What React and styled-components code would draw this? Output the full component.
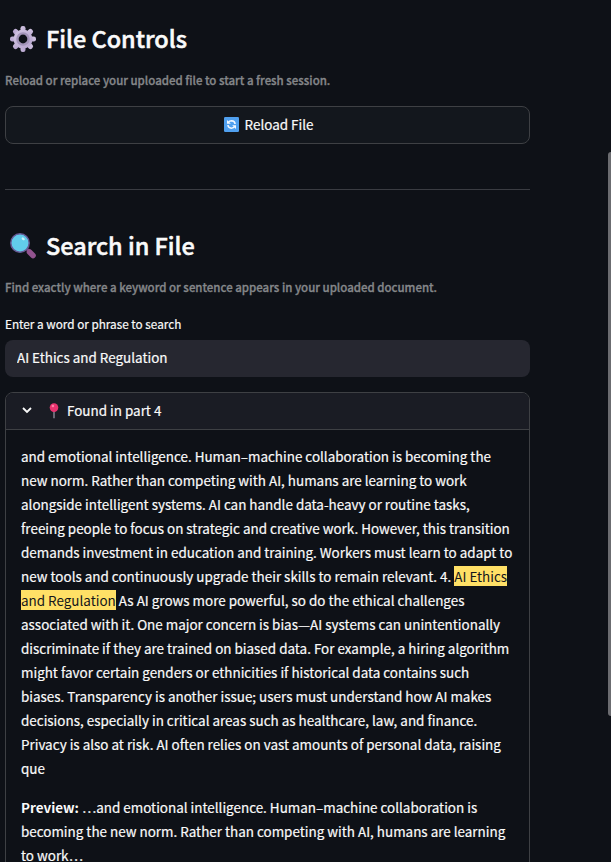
import React from "react";
import styled, { createGlobalStyle } from "styled-components";

const Global = createGlobalStyle`
  * { box-sizing: border-box; }
  html, body { margin: 0; background: #0e1117; overflow: hidden; }
  body {
    color: #fafafa;
    font-family: "Noto Sans CJK KR", "Noto Sans", sans-serif;
    font-size: 13.45px;
    line-height: 24px;
    -webkit-text-stroke: 0.2px currentColor;
  }
`;

const Page = styled.div`
  display: grid;
  grid-template-columns: 525px 3px;
  justify-content: space-between;
  width: 611px;
  height: 862px;
  padding-left: 5px;
  overflow: hidden;
`;

const Content = styled.main`
  display: flex;
  flex-direction: column;
  min-width: 0;
`;

const Heading = styled.h2`
  display: flex;
  align-items: center;
  gap: 9px;
  height: 34px;
  margin: ${({ $top }) => $top}px 0 0;
  padding-left: 4px;
  font-size: 23.45px;
  font-weight: 500;
  line-height: 34px;
  white-space: nowrap;
  -webkit-text-stroke: 0.5px currentColor;

  svg { margin-top: 2px; }
`;

const Caption = styled.p`
  margin: ${({ $top }) => $top}px 0 0;
  height: 20px;
  color: #85878a;
  font-size: 11.47px;
  font-weight: 500;
  line-height: 20px;
  white-space: nowrap;
  -webkit-text-stroke: 0.3px currentColor;
`;

const Button = styled.button`
  display: flex;
  align-items: center;
  justify-content: center;
  gap: 6px;
  height: 38px;
  margin: 16px 0 0;
  padding: 0 0 2px 2px;
  border: 1px solid #3e4044;
  border-radius: 8px;
  background: #13171d;
  color: #fafafa;
  font: inherit;

  svg { margin-top: 1px; }
`;

const Divider = styled.hr`
  width: 100%;
  height: 1px;
  margin: 45px 0 0;
  border: 0;
  background: #3a3c42;
`;

const Label = styled.label`
  height: 20px;
  margin-top: 17px;
  font-size: 11.75px;
  line-height: 20px;
`;

const Input = styled.input`
  width: 100%;
  height: 37px;
  margin-top: 6px;
  padding: 0 12px 3px;
  border: 0;
  border-radius: 8px;
  background: #262730;
  color: #fafafa;
  font: inherit;
`;

const Expander = styled.section`
  height: 490px;
  margin-top: 15px;
  border: 1px solid #3e4044;
  border-radius: 8px 8px 0 0;
  overflow: hidden;
`;

const Summary = styled.header`
  display: flex;
  align-items: center;
  height: 37px;
  padding: 0 0 2px 15px;
  border-bottom: 1px solid #3e4044;
  background: #1a1c24;
`;

const PinSlot = styled.span`
  display: flex;
  margin: 0 8px 0 16px;
`;

const Body = styled.div`
  padding: 14px 0 0 15px;
  white-space: nowrap;
`;

const Paragraph = styled.p`
  margin: 0 0 15px;
`;

const Line = styled.span`
  display: block;
  height: 24px;
`;

const Mark = styled.mark`
  display: inline-block;
  height: 20px;
  background: #ffe066;
  color: #14161b;
  line-height: 20px;
  -webkit-text-stroke: 0;
`;

const Bold = styled.strong`
  font-weight: 700;
  -webkit-text-stroke: 0;
`;

const ScrollThumb = styled.div`
  width: 3px;
  height: 564px;
  margin-top: 152px;
  border-radius: 3px 0 0 3px;
  background: #6b6c70;
`;

const GearIcon = () => (
  <svg width="28" height="28" viewBox="0 0 28 28">
    <defs>
      <linearGradient id="gear" x1="0" y1="0" x2="1" y2="1">
        <stop offset="0" stopColor="#d2c6e2" />
        <stop offset="1" stopColor="#b5a3cd" />
      </linearGradient>
    </defs>
    <g fill="url(#gear)">
      {[0, 45, 90, 135].map((a) => (
        <rect key={a} x="11.5" y="1" width="5" height="26" rx="2.2" transform={`rotate(${a} 14 14)`} />
      ))}
      <circle cx="14" cy="14" r="9.5" />
    </g>
    <circle cx="14" cy="14" r="5.6" fill="none" stroke="#a294b8" strokeWidth="2.4" />
    <circle cx="14" cy="14" r="4.4" fill="#0e1117" />
  </svg>
);

const LensIcon = () => (
  <svg width="28" height="28" viewBox="0 0 28 28">
    <path d="M17 18L19 16" stroke="#6a4c86" strokeWidth="4" />
    <path d="M20.5 20L24 23.5" stroke="#92538f" strokeWidth="5.6" strokeLinecap="round" />
    <circle cx="11" cy="11" r="9.2" fill="#62cdec" stroke="#675a96" strokeWidth="1.5" />
    <ellipse cx="14.2" cy="6.8" rx="1.8" ry="1.2" fill="#c9f3fc" transform="rotate(40 14.2 6.8)" />
  </svg>
);

const ReloadIcon = () => (
  <svg width="15" height="15" viewBox="0 0 15 15">
    <rect width="15" height="15" rx="1.2" fill="#50a0ef" />
    <g fill="none" stroke="#f3f8ff" strokeWidth="1.5">
      <path d="M4.2 5.6Q5.4 3.8 7.6 3.8Q10.8 3.9 11.1 7" />
      <path d="M10.8 9.4Q9.6 11.2 7.4 11.2Q4.2 11.1 3.9 8" />
    </g>
    <path d="M3 3V6.8H6.8ZM12 12V8.2H8.2Z" fill="#f3f8ff" />
  </svg>
);

const Chevron = () => (
  <svg width="12" height="12" viewBox="0 0 12 12">
    <path d="M2 4L6 8L10 4" fill="none" stroke="#fafafa" strokeWidth="1.8" />
  </svg>
);

const PinIcon = () => (
  <svg width="10" height="17" viewBox="0 0 10 17">
    <path d="M5 8V16.2" stroke="#8c8a99" strokeWidth="1.4" />
    <circle cx="5" cy="5.6" r="4.3" fill="#e8336f" />
    <circle cx="3.9" cy="4" r="1.3" fill="#ff7fa5" />
  </svg>
);

const LINES = [
  "and emotional intelligence. Human–machine collaboration is becoming the",
  "new norm. Rather than competing with AI, humans are learning to work",
  "alongside intelligent systems. AI can handle data-heavy or routine tasks,",
  "freeing people to focus on strategic and creative work. However, this transition",
  "demands investment in education and training. Workers must learn to adapt to",
  <>new tools and continuously upgrade their skills to remain relevant. 4. <Mark>AI Ethics</Mark></>,
  <><Mark>and Regulation</Mark> As AI grows more powerful, so do the ethical challenges</>,
  "associated with it. One major concern is bias—AI systems can unintentionally",
  "discriminate if they are trained on biased data. For example, a hiring algorithm",
  "might favor certain genders or ethnicities if historical data contains such",
  "biases. Transparency is another issue; users must understand how AI makes",
  "decisions, especially in critical areas such as healthcare, law, and finance.",
  "Privacy is also at risk. AI often relies on vast amounts of personal data, raising",
  "que",
];

const PREVIEW = [
  <><Bold>Preview:</Bold> …and emotional intelligence. Human–machine collaboration is</>,
  "becoming the new norm. Rather than competing with AI, humans are learning",
  "to work…",
];

const renderLines = (lines) => lines.map((text, i) => <Line key={i}>{text}</Line>);

export default function App() {
  return (
    <>
      <Global />
      <Page>
        <Content>
          <Heading $top={21}><GearIcon />File Controls</Heading>
          <Caption $top={15}>Reload or replace your uploaded file to start a fresh session.</Caption>
          <Button><ReloadIcon />Reload File</Button>
          <Divider />
          <Heading $top={38}><LensIcon />Search in File</Heading>
          <Caption $top={15}>Find exactly where a keyword or sentence appears in your uploaded document.</Caption>
          <Label htmlFor="query">Enter a word or phrase to search</Label>
          <Input id="query" defaultValue="AI Ethics and Regulation" />
          <Expander>
            <Summary><Chevron /><PinSlot><PinIcon /></PinSlot>Found in part 4</Summary>
            <Body>
              <Paragraph>{renderLines(LINES)}</Paragraph>
              <Paragraph>{renderLines(PREVIEW)}</Paragraph>
            </Body>
          </Expander>
        </Content>
        <ScrollThumb />
      </Page>
    </>
  );
}
